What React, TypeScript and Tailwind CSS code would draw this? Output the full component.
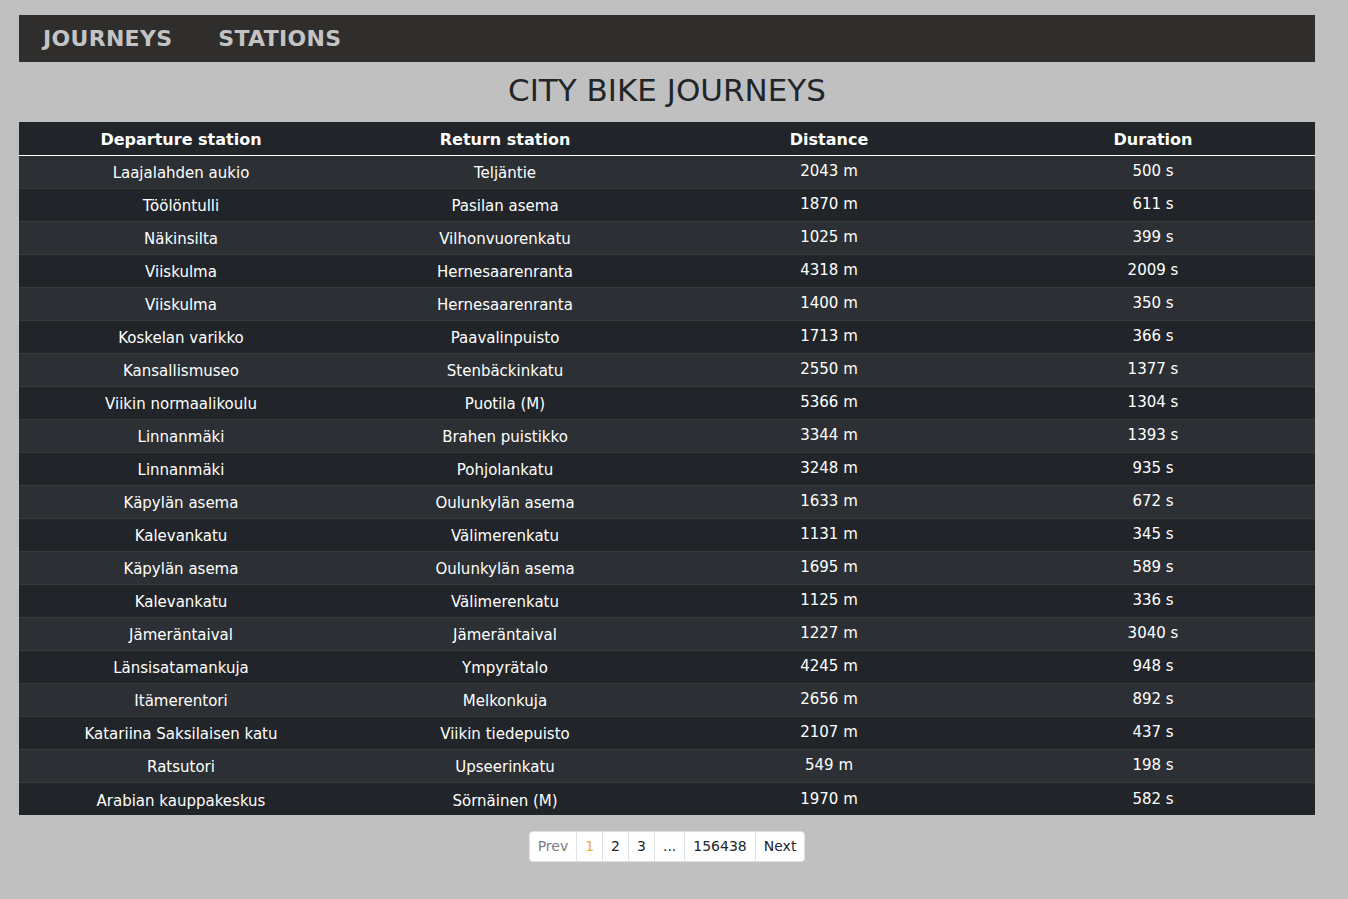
const journeys = [
  ["Laajalahden aukio", "Teljäntie", 2043, 500],
  ["Töölöntulli", "Pasilan asema", 1870, 611],
  ["Näkinsilta", "Vilhonvuorenkatu", 1025, 399],
  ["Viiskulma", "Hernesaarenranta", 4318, 2009],
  ["Viiskulma", "Hernesaarenranta", 1400, 350],
  ["Koskelan varikko", "Paavalinpuisto", 1713, 366],
  ["Kansallismuseo", "Stenbäckinkatu", 2550, 1377],
  ["Viikin normaalikoulu", "Puotila (M)", 5366, 1304],
  ["Linnanmäki", "Brahen puistikko", 3344, 1393],
  ["Linnanmäki", "Pohjolankatu", 3248, 935],
  ["Käpylän asema", "Oulunkylän asema", 1633, 672],
  ["Kalevankatu", "Välimerenkatu", 1131, 345],
  ["Käpylän asema", "Oulunkylän asema", 1695, 589],
  ["Kalevankatu", "Välimerenkatu", 1125, 336],
  ["Jämeräntaival", "Jämeräntaival", 1227, 3040],
  ["Länsisatamankuja", "Ympyrätalo", 4245, 948],
  ["Itämerentori", "Melkonkuja", 2656, 892],
  ["Katariina Saksilaisen katu", "Viikin tiedepuisto", 2107, 437],
  ["Ratsutori", "Upseerinkatu", 549, 198],
  ["Arabian kauppakeskus", "Sörnäinen (M)", 1970, 582],
] as const;

const Pager = () => {
  const items = ["Prev", "1", "2", "3", "...", "156438", "Next"];
  return (
    <div className="flex justify-center mt-[16px]">
      <ul className="flex bg-white rounded border border-[#dee2e6] text-[14px]">
        {items.map((it, i) => (
          <li
            key={i}
            className={
              "h-[29px] flex items-center px-[8px] " +
              (i > 0 ? "border-l border-[#dee2e6] " : "") +
              (i === 0 ? "text-[#7b7f83]" : i === 1 ? "text-[#f0ad2e]" : "text-[#212529]")
            }
          >
            {it}
          </li>
        ))}
      </ul>
    </div>
  );
}

export default function App() {
  return (
    <div className="min-h-[899px] bg-[#c0c0c0] pt-[15px] pl-[19px] pr-[33px] font-['DejaVu_Sans',Verdana,sans-serif]">
      <nav className="h-[47px] bg-[#2f2e2d] flex items-center gap-[46px] pl-[24px]">
        <span className="text-[22px] font-bold text-[#c4c4c4] tracking-[0.3px]">JOURNEYS</span>
        <span className="text-[22px] font-bold text-[#c4c4c4] tracking-[0.3px]">STATIONS</span>
      </nav>
      <h1 className="text-center text-[31px] text-[#212529] leading-[36px] mt-[10px] mb-[14px]">CITY BIKE JOURNEYS</h1>
      <table className="w-full table-fixed text-white text-[15px]">
        <thead>
          <tr className="bg-[#212529] h-[33px] border-b border-white">
            <th className="font-bold text-[16px] pt-[4px]">Departure station</th>
            <th className="font-bold text-[16px] pt-[4px]">Return station</th>
            <th className="font-bold text-[16px] pt-[4px]">Distance</th>
            <th className="font-bold text-[16px] pt-[4px]">Duration</th>
          </tr>
        </thead>
        <tbody>
          {journeys.map((j, i) => (
            <tr
              key={i}
              className={"h-[33px] border-t border-[#373b3e] " + (i % 2 === 0 ? "bg-[#2c3034]" : "bg-[#212529]")}
            >
              <td className="text-center pt-[4px]">{j[0]}</td>
              <td className="text-center pt-[4px]">{j[1]}</td>
              <td className="text-center">{j[2]} m</td>
              <td className="text-center">{j[3]} s</td>
            </tr>
          ))}
        </tbody>
      </table>
      <Pager />
    </div>
  );
}
